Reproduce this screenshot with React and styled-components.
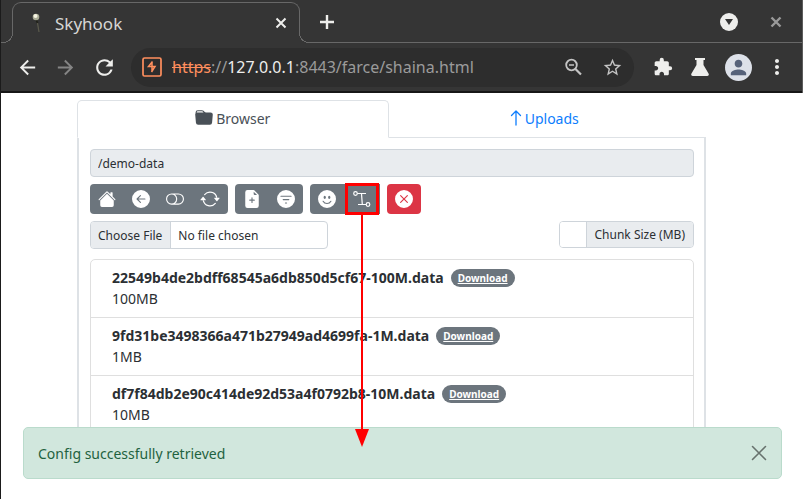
import { useState } from "react"
import styled, { createGlobalStyle } from "styled-components"
import {
  BsFolderFill,
  BsHouseFill,
  BsArrowLeftCircleFill,
  BsToggleOff,
  BsArrowRepeat,
  BsFileEarmarkPlusFill,
  BsFilterCircleFill,
  BsEmojiSmileFill,
  BsXCircleFill,
} from "react-icons/bs"
import {
  MdArrowBack,
  MdArrowForward,
  MdRefresh,
  MdStarBorder,
  MdExtension,
  MdPerson,
  MdMoreVert,
} from "react-icons/md"

const files = [
  { name: "22549b4de2bdff68545a6db850d5cf67-100M.data", size: "100MB" },
  { name: "9fd31be3498366a471b27949ad4699fa-1M.data", size: "1MB" },
  { name: "df7f84db2e90c414de92d53a4f0792b8-10M.data", size: "10MB" },
]

const BrowserChrome = () => {
  return (
    <Header>
      <TabStrip>
        <BrowserTab>
          <PinIcon />
          <TabTitle>Skyhook</TabTitle>
          <ChromeBtn aria-label="Close tab"><CrossIcon size={12} width={2} /></ChromeBtn>
        </BrowserTab>
        <ChromeBtn aria-label="New tab"><PlusIcon /></ChromeBtn>
        <WindowBtns>
          <RoundBtn aria-label="Search tabs">
            <svg width="8" height="6" viewBox="0 0 8 6"><path d="M0 0h8L4 6z" fill="#353535" /></svg>
          </RoundBtn>
          <ChromeBtn $color="#9a9a9a" aria-label="Close window"><CrossIcon size={12} width={2.4} /></ChromeBtn>
        </WindowBtns>
      </TabStrip>
      <Toolbar>
        <NavBtns>
          <ChromeBtn aria-label="Back"><MdArrowBack size={23} /></ChromeBtn>
          <ChromeBtn $color="#858585" aria-label="Forward"><MdArrowForward size={23} /></ChromeBtn>
          <ChromeBtn aria-label="Reload"><MdRefresh size={25} /></ChromeBtn>
        </NavBtns>
        <AddressBar>
          <BurpIcon />
          <Url><Scheme>https</Scheme>://<Host>127.0.0.1</Host>:8443/farce/shaina.html</Url>
          <ChromeBtn $color="#c4c4c4" aria-label="Zoom"><ZoomIcon /></ChromeBtn>
          <ChromeBtn $color="#c4c4c4" aria-label="Bookmark"><MdStarBorder size={21} /></ChromeBtn>
        </AddressBar>
        <Extensions>
          <ToolBtn aria-label="Extensions"><MdExtension size={20} /></ToolBtn>
          <ToolBtn aria-label="Labs"><FlaskIcon /></ToolBtn>
          <Avatar aria-label="Profile"><MdPerson size={23} /></Avatar>
          <ToolBtn aria-label="Menu"><MdMoreVert size={24} /></ToolBtn>
        </Extensions>
      </Toolbar>
    </Header>
  )
}

const CrossIcon = ({ size, width }) => (
  <svg width={size} height={size} viewBox="0 0 12 12">
    <path d="M1.500 1.500l9 9M10.500 1.500l-9 9" stroke="currentColor" strokeWidth={width} />
  </svg>
)

const PlusIcon = () => (
  <svg width="22" height="22" viewBox="0 0 22 22">
    <path d="M4 11h14M11 4v14" stroke="currentColor" strokeWidth="2.4" />
  </svg>
)

const ZoomIcon = () => (
  <svg width="21" height="21" viewBox="0 0 21 21" fill="none" stroke="currentColor">
    <circle cx="8.500" cy="8" r="5.300" strokeWidth="1.800" />
    <path d="M12.500 12l5.500 5.500" strokeWidth="2.200" />
    <path d="M6 8h5" strokeWidth="1.500" />
  </svg>
)

const PinIcon = () => (
  <svg width="18" height="20" viewBox="0 0 18 20">
    <path d="M10 7l2 12" stroke="#5b5a4c" strokeWidth="1.2" />
    <path d="M9 6l1.500 4" stroke="#20211b" strokeWidth="2" />
    <circle cx="9" cy="4" r="3.300" fill="#a9ab95" />
    <circle cx="8.500" cy="3" r="2" fill="#f6f4e2" />
  </svg>
)

const BurpIcon = () => (
  <svg width="20" height="20" viewBox="0 0 20 20" fill="none" stroke="#ff8f5e">
    <rect x="1" y="1" width="18" height="18" rx="1.500" strokeWidth="1.700" />
    <path d="M10.500 4.500L6.500 9.500h6.500l-3.500 5.500M10 5v4.500M10 9.500v5" strokeWidth="1.500" />
  </svg>
)

const FlaskIcon = () => (
  <svg width="18" height="18" viewBox="0 0 18 18">
    <path d="M4 0h10v2h-1.500v5l5 8.500c.700 1.200.200 2.500-1.200 2.500H1.700C.300 18-.200 16.700.500 15.500l5-8.500V2H4z" fill="currentColor" />
  </svg>
)

const UpIcon = () => (
  <svg width="12" height="18" viewBox="0 0 12 18" fill="none" stroke="currentColor" strokeLinecap="round" strokeLinejoin="round">
    <path d="M6 16V2M1.500 6.500L6 2l4.500 4.500" strokeWidth="1.300" />
  </svg>
)

const BezierIcon = () => (
  <svg width="20" height="18" viewBox="0 0 20 18" fill="none" stroke="currentColor" strokeWidth="1.200">
    <circle cx="3.500" cy="3.500" r="1.800" />
    <circle cx="16" cy="14.500" r="1.800" />
    <path d="M5.300 3.500H14M9.500 3.500l.800 11M6 14.500h8.200" />
  </svg>
)

const CloseIcon = () => (
  <svg width="16" height="16" viewBox="0 0 16 16">
    <path d="M1.500 1.500l13 13M14.500 1.500l-13 13" stroke="currentColor" strokeWidth="1.600" strokeLinecap="round" />
  </svg>
)

const App = () => {
  const [showAlert, setShowAlert] = useState(true)

  return (
    <Window>
      <GlobalStyle />
      <BrowserChrome />
      <Page>
        <Tabs>
          <TabBtn $active><BsFolderFill size={18} /> Browser</TabBtn>
          <TabBtn><UpIcon /> Uploads</TabBtn>
        </Tabs>
        <Card>
          <PathInput aria-label="Path" defaultValue="/demo-data" readOnly />
          <Actions>
            <BtnGroup>
              <ActionBtn aria-label="Home"><BsHouseFill size={18} /></ActionBtn>
              <ActionBtn aria-label="Back"><BsArrowLeftCircleFill size={18} /></ActionBtn>
              <ActionBtn aria-label="Toggle"><BsToggleOff size={18} /></ActionBtn>
              <ActionBtn aria-label="Refresh"><BsArrowRepeat size={20} /></ActionBtn>
            </BtnGroup>
            <BtnGroup>
              <ActionBtn aria-label="New file"><BsFileEarmarkPlusFill size={18} /></ActionBtn>
              <ActionBtn aria-label="Filter"><BsFilterCircleFill size={18} /></ActionBtn>
            </BtnGroup>
            <BtnGroup>
              <ActionBtn aria-label="Smile"><BsEmojiSmileFill size={18} /></ActionBtn>
              <Marked>
                <ActionBtn aria-label="Config" onClick={() => setShowAlert(true)}><BezierIcon /></ActionBtn>
                <Arrow />
              </Marked>
            </BtnGroup>
            <BtnGroup>
              <ActionBtn $danger aria-label="Cancel"><BsXCircleFill size={18} /></ActionBtn>
            </BtnGroup>
          </Actions>
          <FileRow>
            <FileInput type="file" aria-label="Upload file" />
            <ChunkGroup>
              <ChunkInput id="chunk" type="text" />
              <ChunkLabel htmlFor="chunk">Chunk Size (MB)</ChunkLabel>
            </ChunkGroup>
          </FileRow>
          <FileList>
            {files.map((file) => (
              <FileItem key={file.name}>
                <FileName>
                  {file.name}
                  <Badge href="#">Download</Badge>
                </FileName>
                <div>{file.size}</div>
              </FileItem>
            ))}
          </FileList>
        </Card>
      </Page>
      {showAlert && (
        <Alert role="alert">
          Config successfully retrieved
          <CloseBtn aria-label="Close" onClick={() => setShowAlert(false)}><CloseIcon /></CloseBtn>
        </Alert>
      )}
    </Window>
  )
}

export default App

const GlobalStyle = createGlobalStyle`
* {
  box-sizing: border-box;
}
body {
  margin: 0;
  background-color: #fff;
  color: #2b2f33;
  font-family: "Noto Sans", sans-serif;
  font-size: 14px;
  line-height: 21px;
}
button, input {
  font-family: inherit;
}
svg {
  display: block;
  flex-shrink: 0;
}
`

const Window = styled.div`
min-height: 100vh;
border-left: 1px solid #1b1b1b;
`

const Header = styled.header`
border-right: 1px solid #5c5c5c;
`

const ChromeBtn = styled.button`
display: flex;
padding: 0;
border: none;
background: none;
color: ${({ $color }) => $color || "#eeeeec"};
`

const ToolBtn = styled(ChromeBtn)`
justify-content: center;
width: 24px;
`

const TabStrip = styled.div`
display: flex;
align-items: center;
gap: 16px;
height: 43px;
padding: 2px 20px 0 11px;
background-color: #353535;
border-bottom: 1px solid #686868;
`

const BrowserTab = styled.div`
position: relative;
display: flex;
align-self: flex-end;
align-items: center;
width: 288px;
height: 41px;
margin-bottom: -1px;
padding: 0 12px 0 14px;
background-color: #353535;
border: 1px solid #686868;
border-bottom: none;
border-radius: 9px 9px 0 0;

&::before, &::after {
  content: "";
  position: absolute;
  bottom: 0;
  width: 10px;
  height: 10px;
}
&::before {
  left: -10px;
  background: radial-gradient(circle at 0 0, #353535 9px, #686868 9px, #686868 10px, #353535 10px);
}
&::after {
  right: -10px;
  background: radial-gradient(circle at 100% 0, #353535 9px, #686868 9px, #686868 10px, #353535 10px);
}
`

const TabTitle = styled.span`
flex: 1;
margin-left: 10px;
color: #d6d6d4;
font-size: 17px;
`

const WindowBtns = styled.div`
display: flex;
align-items: center;
gap: 32px;
margin-left: auto;
`

const RoundBtn = styled.button`
display: flex;
align-items: center;
justify-content: center;
width: 18px;
height: 18px;
padding: 0;
border: none;
border-radius: 50%;
background-color: #eeeeec;
`

const Toolbar = styled.div`
display: flex;
align-items: center;
height: 50px;
padding: 0 13px 0 15px;
background-color: #353535;
border-bottom: 2px solid #161616;
`

const NavBtns = styled.div`
display: flex;
align-items: center;
gap: 15px;
margin-right: 14px;
`

const AddressBar = styled.div`
display: flex;
flex: 1;
align-items: center;
gap: 18px;
height: 39px;
padding: 0 11px;
border-radius: 20px;
background-color: #2d2d2d;
`

const Url = styled.div`
flex: 1;
margin-left: -8px;
color: #9b9b9b;
font-size: 16px;
white-space: nowrap;
`

const Scheme = styled.span`
color: #ff8f5e;
text-decoration: line-through;
`

const Host = styled.span`
color: #eeeeec;
`

const Extensions = styled.div`
display: flex;
align-items: center;
gap: 13px;
margin-left: 17px;
`

const Avatar = styled.button`
display: flex;
align-items: center;
justify-content: center;
width: 27px;
height: 27px;
padding: 0;
border: none;
border-radius: 50%;
background-color: #dde1e9;
color: #56627a;
`

const Page = styled.main`
padding: 7px 97px 0 76px;
`

const Tabs = styled.div`
display: flex;
padding-right: 6px;
border-bottom: 1px solid #dee2e6;
`

const TabBtn = styled.button`
display: flex;
flex: 1;
align-items: center;
justify-content: center;
gap: 3px;
height: 38px;
margin-bottom: -1px;
padding: 0 6px 2px;
border: 1px solid transparent;
border-radius: 5px 5px 0 0;
background: none;
color: #0d7dfd;
font-size: 14px;

${({ $active }) => $active && `
border-color: #dee2e6 #dee2e6 #fff;
background-color: #fff;
color: #495057;
`}
`

const Card = styled.section`
padding: 11px 10px 12px 11px;
border: 2px solid #dee2e6;
border-top: none;
`

const PathInput = styled.input`
display: block;
width: 100%;
height: 28px;
padding: 0 7px;
border: 1px solid #ced4da;
border-radius: 4px;
background-color: #e9ecef;
color: #2b2f33;
font-size: 12px;
`

const Actions = styled.div`
display: flex;
gap: 7px;
margin-top: 7px;
`

const BtnGroup = styled.div`
display: flex;
border-radius: 4px;
`

const ActionBtn = styled.button`
display: flex;
align-items: center;
padding: 0 8px;
height: 30px;
border: none;
background-color: ${({ $danger }) => ($danger ? "#dc3545" : "#6c757d")};
color: #fff;

&:first-child {
  border-radius: 4px 0 0 4px;
}
&:last-child {
  border-radius: 0 4px 4px 0;
}
&:only-child {
  border-radius: 4px;
}
`

const Marked = styled.div`
position: relative;
z-index: 2;

${ActionBtn} {
  border-radius: 0;
}
&::before {
  content: "";
  position: absolute;
  inset: -1px 1px;
  border: 3px solid #f00;
  pointer-events: none;
}
`

/* pointer from the config button down to the alert */
const Arrow = styled.div`
position: absolute;
top: 100%;
left: 50%;
width: 2px;
height: 220px;
margin-left: -1px;
background-color: #f00;

&::after {
  content: "";
  position: absolute;
  top: 215px;
  left: -6px;
  border: 7px solid transparent;
  border-top: 18px solid #f00;
  border-bottom: none;
}
`

const FileRow = styled.div`
display: flex;
justify-content: space-between;
margin-top: 7px;
`

const FileInput = styled.input`
width: 238px;
height: 28px;
border: 1px solid #ced4da;
border-radius: 4px;
color: #2b2f33;
font-size: 12px;
line-height: 25px;
overflow: hidden;

&::file-selector-button {
  height: 26px;
  margin: 0 7px 0 0;
  padding: 0 8px 0 7px;
  border: none;
  border-right: 1px solid #ced4da;
  background-color: #e9ecef;
  color: #2b2f33;
  font-family: inherit;
  font-size: 12px;
}
`

const ChunkGroup = styled.div`
display: flex;
height: 27px;
border: 1px solid #ced4da;
border-radius: 4px;
overflow: hidden;
`

const ChunkInput = styled.input`
width: 27px;
padding: 0 4px;
border: none;
border-right: 1px solid #ced4da;
`

const ChunkLabel = styled.label`
padding: 0 8px;
background-color: #e9ecef;
font-size: 12px;
line-height: 25px;
`

const FileList = styled.ul`
margin: 10px 0 0;
padding: 0;
border: 1px solid #dfdfdf;
border-radius: 5px;
list-style: none;
`

const FileItem = styled.li`
padding: 7px 21px 8px;
font-size: 14px;

& + & {
  border-top: 1px solid #dfdfdf;
}
`

const FileName = styled.div`
display: flex;
align-items: center;
gap: 7px;
font-weight: 700;
`

const Badge = styled.a`
padding: 0 7px;
border-radius: 9px;
background-color: #6c757d;
color: #fff;
font-size: 10px;
line-height: 18px;
`

const Alert = styled.div`
position: fixed;
z-index: 1;
right: 21px;
bottom: 20px;
left: 23px;
display: flex;
align-items: center;
justify-content: space-between;
height: 52px;
padding: 0 14px;
border: 1px solid #badbcc;
border-radius: 5px;
background-color: #d1e7dd;
color: #1f6240;
font-size: 14px;
`

const CloseBtn = styled.button`
display: flex;
padding: 0;
border: none;
background: none;
color: #000;
opacity: 0.5;
`
